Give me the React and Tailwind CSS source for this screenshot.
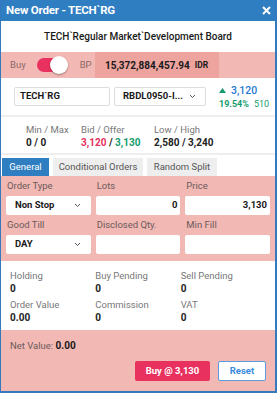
import React from "react";

const pink = "bg-[#f2b8b3]";

function Chevron() {
    return (
        <svg width="7" height="5" viewBox="0 0 7 5">
            <path d="M1 1l2.5 2.5L6 1" fill="none" stroke="#555" strokeWidth="1" />
        </svg>
    );
}

function Field({ label, children }) {
    return (
        <div className="flex flex-col">
            <div className="h-[20px] leading-[20px] text-[9.5px] text-[#6b5b5b] pl-px whitespace-nowrap">{label}</div>
            {children}
        </div>
    );
}

function Stat({ label, value }) {
    return (
        <div className="flex flex-col">
            <div className="text-[9.5px] leading-[13px] text-[#777] whitespace-nowrap">{label}</div>
            <div className="text-[10px] leading-[13px] font-bold text-[#222] whitespace-nowrap">{value}</div>
        </div>
    );
}

export default function App() {
    return (
        <div
            className="w-[277px] h-[393px] bg-[#3479bd] pl-px pr-[2px] pb-[2px] overflow-hidden"
            style={{ fontFamily: "Roboto, 'Liberation Sans', sans-serif" }}
        >
            <div className="h-full bg-white flex flex-col">
                {/* header */}
                <div className="h-[21px] bg-[#2f7ec1] flex items-center justify-between pl-[5px] pr-[4px]">
                    <span className="text-white font-bold text-[11.5px] tracking-[-0.2px]">New Order - TECH`RG</span>
                    <svg width="9" height="9" viewBox="0 0 9 9">
                        <path d="M1 1l7 7M8 1l-7 7" stroke="white" strokeWidth="2" />
                    </svg>
                </div>

                {/* symbol */}
                <div className="h-[31px] flex items-center justify-center text-[10px] font-medium text-[#1a1a1a] whitespace-nowrap">
                    TECH`Regular Market`Development Board
                </div>

                {/* buying power */}
                <div className={`h-[26px] ${pink} flex items-center`}>
                    <span className="ml-[9px] text-[9.5px] text-[#8a6a6a]">Buy</span>
                    <div className="relative ml-[11px] w-[31px] h-[18px] flex items-center">
                        <div className="w-[24px] h-[14px] rounded-full bg-[#e8315f]" />
                        <div className="absolute right-0 top-0 w-[18px] h-[18px] rounded-full bg-white shadow-[0_1px_2px_rgba(0,0,0,0.35)]" />
                    </div>
                    <span className="ml-[12px] text-[9.5px] text-[#8a6a6a]">BP</span>
                    <div className="ml-[3px] w-[124px] h-full bg-[#eda39e] flex items-center justify-center gap-[5px]">
                        <span className="text-[10px] font-bold text-[#1a1a1a]">15,372,884,457.94</span>
                        <span className="text-[8.5px] font-bold text-[#1a1a1a]">IDR</span>
                    </div>
                </div>

                {/* symbol inputs */}
                <div className="h-[37px] flex items-center pl-[13px] pr-[6px]">
                    <div className="shrink-0 w-[96px] h-[19px] border border-[#ddd] rounded-[2px] flex items-center pl-[5px] text-[9.5px] font-bold text-[#1a1a1a] whitespace-nowrap">
                        TECH`RG
                    </div>
                    <div className="shrink-0 ml-[4px] w-[92px] h-[19px] border border-[#ddd] rounded-[2px] flex items-center justify-between pl-[8px] pr-[9px] text-[9.5px] font-bold text-[#1a1a1a] whitespace-nowrap">
                        <span>RBDL0950-I...</span>
                        <Chevron />
                    </div>
                    <div className="ml-[13px] flex flex-col gap-[1px]">
                        <div className="flex items-center gap-[5px]">
                            <svg width="7" height="5" viewBox="0 0 7 5">
                                <path d="M0 5L3.5 0L7 5Z" fill="#139b6e" />
                            </svg>
                            <span className="text-[10.5px] leading-[13px] text-[#1f78d1] font-medium">3,120</span>
                        </div>
                        <div className="flex items-center gap-[5px] text-[9px] leading-[12px] whitespace-nowrap">
                            <span className="font-bold text-[#139b6e]">19.54%</span>
                            <span className="text-[#139b6e]">510</span>
                        </div>
                    </div>
                </div>

                <div className="h-[2px] bg-[#eeeeee]" />

                {/* min/max */}
                <div className="h-[36px] flex items-center pt-[2px]">
                    <div className="ml-[25px] w-[55px]">
                        <Stat label="Min / Max" value="0 / 0" />
                    </div>
                    <div className="w-[73px]">
                        <div className="flex flex-col">
                            <div className="text-[9.5px] leading-[13px] text-[#777]">Bid / Offer</div>
                            <div className="text-[10px] leading-[13px] font-bold whitespace-nowrap">
                                <span className="text-[#e8315f]">3,120</span>
                                <span className="text-[#222]"> / </span>
                                <span className="text-[#139b6e]">3,130</span>
                            </div>
                        </div>
                    </div>
                    <Stat label="Low / High" value="2,580 / 3,240" />
                </div>

                <div className="h-[2px] bg-[#eeeeee]" />

                {/* tabs */}
                <div className="h-[21px] flex items-end pl-[1px] gap-[4px]">
                    <div className="w-[47px] h-[18px] bg-[#2f7ec1] text-white text-[9.5px] flex items-center justify-center">General</div>
                    <div className="w-[90px] h-[18px] bg-[#eeeeee] text-[#555] text-[9.5px] flex items-center justify-center whitespace-nowrap">Conditional Orders</div>
                    <div className="w-[70px] h-[18px] bg-[#eeeeee] text-[#555] text-[9.5px] flex items-center justify-center whitespace-nowrap">Random Split</div>
                </div>

                {/* order form */}
                <div className={`${pink} h-[85px] pl-[5px] pr-[5px] grid grid-cols-3 gap-x-[5px] content-start`}>
                    <Field label="Order Type">
                        <div className="h-[19px] bg-white rounded-[2px] flex items-center justify-between pl-[9px] pr-[10px] text-[9.5px] font-bold text-[#1a1a1a]">
                            <span>Non Stop</span>
                            <Chevron />
                        </div>
                    </Field>
                    <Field label="Lots">
                        <div className="h-[19px] bg-white rounded-[2px] flex items-center justify-end pr-[3px] text-[9.5px] font-bold text-[#1a1a1a]">0</div>
                    </Field>
                    <Field label="Price">
                        <div className="h-[19px] bg-white rounded-[2px] flex items-center justify-end pr-[3px] text-[9.5px] font-bold text-[#1a1a1a]">3,130</div>
                    </Field>
                    <Field label="Good Till">
                        <div className="h-[19px] bg-white rounded-[2px] flex items-center justify-between pl-[9px] pr-[10px] text-[9.5px] font-bold text-[#1a1a1a]">
                            <span>DAY</span>
                            <Chevron />
                        </div>
                    </Field>
                    <Field label="Disclosed Qty.">
                        <div className="h-[19px] bg-white rounded-[2px]" />
                    </Field>
                    <Field label="Min Fill">
                        <div className="h-[19px] bg-white rounded-[2px]" />
                    </Field>
                </div>

                {/* summary */}
                <div className="h-[69px] px-[9px] pt-[8px] grid grid-cols-3 gap-y-[3px] content-start">
                    <Stat label="Holding" value="0" />
                    <Stat label="Buy Pending" value="0" />
                    <Stat label="Sell Pending" value="0" />
                    <Stat label="Order Value" value="0.00" />
                    <Stat label="Commission" value="0" />
                    <Stat label="VAT" value="0" />
                </div>

                {/* footer */}
                <div className={`flex-1 ${pink} flex flex-col px-[9px]`}>
                    <div className="mt-[8px] text-[9.5px] text-[#6b5b5b]">
                        Net Value: <span className="text-[10px] font-bold text-[#1a1a1a]">0.00</span>
                    </div>
                    <div className="mt-[8px] flex justify-end gap-[8px]">
                        <button className="w-[75px] h-[20px] bg-[#e8315f] rounded-[2px] text-white text-[9.5px] font-bold">Buy @ 3,130</button>
                        <button className="w-[48px] h-[20px] bg-white border border-[#5a9be0] rounded-[2px] text-[#3a8de0] text-[9.5px] font-bold">Reset</button>
                    </div>
                </div>
            </div>
        </div>
    );
}
